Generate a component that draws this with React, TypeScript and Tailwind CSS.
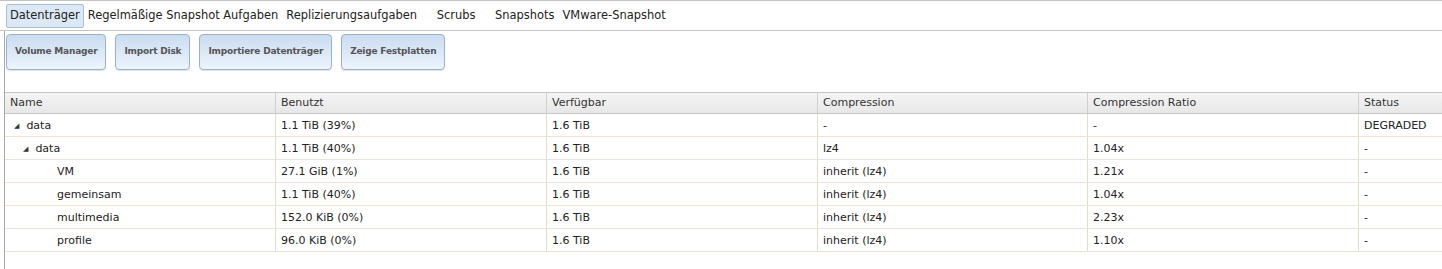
import type { ReactNode } from "react";

const font = { fontFamily: '"DejaVu Sans", Verdana, sans-serif' };

interface Row {
  level: number;
  expand: boolean;
  name: string;
  used: string;
  avail: string;
  comp: string;
  ratio: string;
  status: string;
}

const rows: Row[] = [
  { level: 0, expand: true, name: "data", used: "1.1 TiB (39%)", avail: "1.6 TiB", comp: "-", ratio: "-", status: "DEGRADED" },
  { level: 1, expand: true, name: "data", used: "1.1 TiB (40%)", avail: "1.6 TiB", comp: "lz4", ratio: "1.04x", status: "-" },
  { level: 2, expand: false, name: "VM", used: "27.1 GiB (1%)", avail: "1.6 TiB", comp: "inherit (lz4)", ratio: "1.21x", status: "-" },
  { level: 2, expand: false, name: "gemeinsam", used: "1.1 TiB (40%)", avail: "1.6 TiB", comp: "inherit (lz4)", ratio: "1.04x", status: "-" },
  { level: 2, expand: false, name: "multimedia", used: "152.0 KiB (0%)", avail: "1.6 TiB", comp: "inherit (lz4)", ratio: "2.23x", status: "-" },
  { level: 2, expand: false, name: "profile", used: "96.0 KiB (0%)", avail: "1.6 TiB", comp: "inherit (lz4)", ratio: "1.10x", status: "-" },
];

const headers = ["Name", "Benutzt", "Verfügbar", "Compression", "Compression Ratio", "Status"];

function Tab({ children, active, className }: { children: ReactNode; active?: boolean; className?: string }) {
  return (
    <div
      className={
        "flex h-[24px] items-center px-[3px] " +
        (active ? "rounded-[2px] border border-[#a9bfd6] bg-[#dce8f5] " : "border border-transparent ") +
        (className ?? "")
      }
    >
      {children}
    </div>
  );
}

function Button({ children }: { children: ReactNode }) {
  return (
    <button
      type="button"
      className="h-[36px] rounded-[4px] border border-[#98b1cd] bg-gradient-to-b from-[#cadcf0] to-[#edf4fc] px-[8px] text-[9px] font-bold tracking-[-0.2px] text-[#555] shadow-[0_1px_1px_rgba(0,0,0,0.12)]"
    >
      {children}
    </button>
  );
}

function Cell({ children, className }: { children: ReactNode; className?: string }) {
  return (
    <div className={"flex items-center overflow-hidden whitespace-nowrap border-r border-[#e6dccb] pl-[5px] pt-[2px] " + (className ?? "")}>
      {children}
    </div>
  );
}

const cols = "grid grid-cols-[271px_271px_271px_270px_271px_200px]";

export default function App() {
  return (
    <div className="h-[269px] w-[1442px] overflow-hidden bg-white text-[11px] text-[#222]" style={font}>
      <div className="flex h-[31px] items-center border-y border-[#c4c4c4] pl-[6px] pt-[1px] text-[11.45px]">
        <Tab active>Datenträger</Tab>
        <Tab>Regelmäßige Snapshot Aufgaben</Tab>
        <Tab>Replizierungsaufgaben</Tab>
        <Tab className="w-[70px] justify-center">Scrubs</Tab>
        <Tab>Snapshots</Tab>
        <Tab>VMware-Snapshot</Tab>
      </div>
      <div className="ml-[4px] h-[238px] border-l border-[#a8a8a8]">
        <div className="flex gap-[9px] pl-[1px] pt-[3px]">
          <Button>Volume Manager</Button>
          <Button>Import Disk</Button>
          <Button>Importiere Datenträger</Button>
          <Button>Zeige Festplatten</Button>
        </div>
        <div className="mt-[22px]">
          <div className={cols + " h-[22px] border-y border-[#c6c6c6] bg-gradient-to-b from-[#f5f5f5] to-[#e7e7e7] text-[#333]"}>
            {headers.map((h) => (
              <div key={h} className="flex items-center border-r border-[#cfcfcf] pl-[5px]">
                {h}
              </div>
            ))}
          </div>
          {rows.map((r, i) => (
            <div key={i} className={cols + " h-[23px] border-b border-[#ede4d6]"}>
              <Cell>
                <span
                  className="flex items-center"
                  style={{ paddingLeft: r.level === 2 ? 47 : 4 + r.level * 9 }}
                >
                  {r.expand && <span className="mr-[7px] text-[7px] leading-none text-[#333]">◢</span>}
                  {r.name}
                </span>
              </Cell>
              <Cell>{r.used}</Cell>
              <Cell>{r.avail}</Cell>
              <Cell>{r.comp}</Cell>
              <Cell>{r.ratio}</Cell>
              <Cell>{r.status}</Cell>
            </div>
          ))}
        </div>
      </div>
    </div>
  );
}
